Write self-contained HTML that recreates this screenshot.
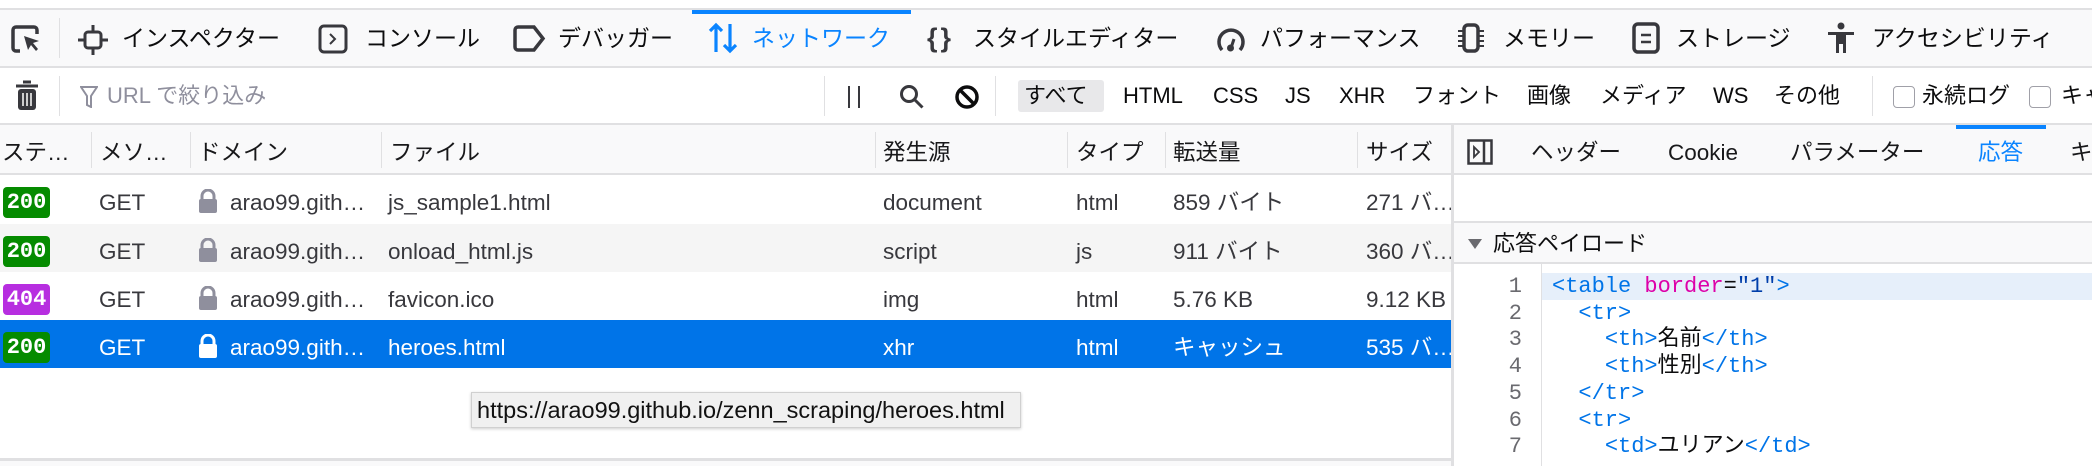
<!DOCTYPE html>
<html><head><meta charset="utf-8"><style>
*{margin:0;padding:0;box-sizing:border-box}
body{width:2092px;height:466px;overflow:hidden;background:#fff;font-family:"Liberation Sans","Noto Sans CJK JP",sans-serif;color:#0c0c0d;position:relative}
.a{position:absolute;white-space:nowrap}
.t{font-size:23px;line-height:56px;top:10px}
.f{font-size:22px;line-height:58px;top:67px}
.h{font-size:22.5px;line-height:50px;top:128px;color:#18181a}
.r{position:absolute;left:0;width:1451px;height:48px;font-size:22.5px;line-height:48px;color:#38383d}
.r span{position:absolute;white-space:nowrap;top:4px}
.b{top:12px;left:3px;width:47px;height:31px;border-radius:4px;color:#fff;font:bold 22px/31px "Liberation Mono",monospace;text-align:center}
.vl{position:absolute;width:1px;background:#e0e0e2}
.code{font-family:"Liberation Mono","Noto Sans CJK JP",monospace;font-size:22px;line-height:26.7px}
.tg{color:#0074e8}.at{color:#dd00a9}.vv{color:#003eaa}
svg{position:absolute}
</style></head><body>
<!-- top toolbar -->
<div class="a" style="top:8px;left:0;width:2092px;height:2px;background:#e0e0e2"></div>
<div class="a" style="top:10px;left:0;width:2092px;height:56px;background:#f9f9fa"></div>
<div class="a" style="top:66px;left:0;width:2092px;height:2px;background:#e0e0e2"></div>
<div class="a" style="top:10px;left:692px;width:219px;height:4px;background:#0a84ff"></div>
<svg style="left:10px;top:24px" width="32" height="30" viewBox="0 0 32 30"><path d="M10 27H6a3 3 0 0 1-3-3V6a3 3 0 0 1 3-3h18a3 3 0 0 1 3 3v4" fill="none" stroke="#38383d" stroke-width="3.5"/><path d="M14 12l15 5-6 2 5 6-2 2-5-6-3 5z" fill="#38383d"/></svg>
<div class="vl" style="left:59px;top:18px;height:40px"></div>
<svg style="left:77px;top:24px" width="32" height="32" viewBox="0 0 32 32"><rect x="8" y="8" width="16" height="16" rx="3" fill="none" stroke="#38383d" stroke-width="3"/><path d="M16 1v7M16 24v7M1 16h7M24 16h7" stroke="#38383d" stroke-width="3"/></svg>
<div class="a t" style="left:122px">インスペクター</div>
<svg style="left:318px;top:24px" width="30" height="30" viewBox="0 0 30 30"><rect x="2" y="2" width="26" height="26" rx="4" fill="none" stroke="#38383d" stroke-width="3"/><path d="M12 10l5 5-5 5" fill="none" stroke="#38383d" stroke-width="2"/></svg>
<div class="a t" style="left:365px">コンソール</div>
<svg style="left:513px;top:25px" width="33" height="27" viewBox="0 0 33 27"><path d="M5 2h16l9 11.5-9 11.5H5a3 3 0 0 1-3-3V5a3 3 0 0 1 3-3z" fill="none" stroke="#38383d" stroke-width="3.5"/></svg>
<div class="a t" style="left:558px">デバッガー</div>
<svg style="left:707px;top:22px" width="32" height="32" viewBox="0 0 32 32"><path d="M9 30V3M3 9l6-6 6 6M23 2v27M17 23l6 6 6-6" fill="none" stroke="#0a84ff" stroke-width="3.2"/></svg>
<div class="a t" style="left:752px;color:#0a84ff">ネットワーク</div>
<div class="a t" style="left:927px;font-weight:bold;font-size:27px;color:#38383d;letter-spacing:3px">{}</div>
<div class="a t" style="left:973px">スタイルエディター</div>
<svg style="left:1215px;top:23px" width="32" height="30" viewBox="0 0 32 30"><path d="M7 27A12 12 0 1 1 25 27" fill="none" stroke="#38383d" stroke-width="3.5"/><path d="M16 25l3-9" stroke="#38383d" stroke-width="3"/><circle cx="15.5" cy="25" r="3.5" fill="#38383d"/></svg>
<div class="a t" style="left:1260px">パフォーマンス</div>
<svg style="left:1456px;top:23px" width="30" height="30" viewBox="0 0 30 30"><rect x="8" y="2" width="14" height="26" rx="4" fill="none" stroke="#38383d" stroke-width="3.5"/><path d="M2 8h5M2 13h5M2 18h5M2 23h5M23 8h5M23 13h5M23 18h5M23 23h5" stroke="#38383d" stroke-width="2"/></svg>
<div class="a t" style="left:1503px">メモリー</div>
<svg style="left:1632px;top:22px" width="28" height="32" viewBox="0 0 28 32"><rect x="2" y="2" width="24" height="28" rx="4" fill="none" stroke="#38383d" stroke-width="3.5"/><path d="M9 13h10M9 20h10" stroke="#38383d" stroke-width="2.5"/></svg>
<div class="a t" style="left:1676px">ストレージ</div>
<svg style="left:1827px;top:22px" width="28" height="32" viewBox="0 0 28 32"><circle cx="14" cy="4" r="3.5" fill="#38383d"/><path d="M1 10h26v3h-8v18h-3v-9h-4v9H9V13H1z" fill="#38383d"/></svg>
<div class="a t" style="left:1872px">アクセシビリティ</div>
<!-- filter toolbar -->
<div class="a" style="top:123px;left:0;width:2092px;height:2px;background:#e0e0e2"></div>
<svg style="left:14px;top:80px" width="26" height="32" viewBox="0 0 26 32"><path d="M9 2h8M2 6h22" stroke="#38383d" stroke-width="3"/><rect x="4" y="9" width="18" height="21" rx="3" fill="#38383d"/><path d="M9 13v13M13 13v13M17 13v13" stroke="#fff" stroke-width="1.5"/></svg>
<div class="vl" style="left:59px;top:76px;height:40px"></div>
<svg style="left:80px;top:86px" width="18" height="22" viewBox="0 0 18 22"><path d="M1 1h16l-6 9v11l-4-2v-9z" fill="none" stroke="#8f8f9d" stroke-width="2"/></svg>
<div class="a f" style="left:107px;color:#8f8f9d">URL で絞り込み</div>
<div class="vl" style="left:824px;top:76px;height:40px"></div>
<div class="a" style="left:848px;top:86px;width:2px;height:22px;background:#38383d"></div>
<div class="a" style="left:858px;top:86px;width:2px;height:22px;background:#38383d"></div>
<svg style="left:899px;top:84px" width="26" height="26" viewBox="0 0 26 26"><circle cx="10" cy="10" r="7.5" fill="none" stroke="#38383d" stroke-width="3"/><path d="M15.5 15.5l8 8" stroke="#38383d" stroke-width="3"/></svg>
<svg style="left:954px;top:84px" width="26" height="26" viewBox="0 0 26 26"><circle cx="13" cy="13" r="10" fill="none" stroke="#0c0c0d" stroke-width="3.5"/><path d="M6 6l14 14" stroke="#0c0c0d" stroke-width="3.5"/></svg>
<div class="vl" style="left:995px;top:76px;height:40px"></div>
<div class="a" style="left:1018px;top:80px;width:86px;height:32px;background:#e8e8ea;border-radius:3px"></div>
<div class="a f" style="left:1024px">すべて</div>
<div class="a f" style="left:1123px">HTML</div>
<div class="a f" style="left:1213px">CSS</div>
<div class="a f" style="left:1285px">JS</div>
<div class="a f" style="left:1339px">XHR</div>
<div class="a f" style="left:1413px">フォント</div>
<div class="a f" style="left:1527px">画像</div>
<div class="a f" style="left:1600px">メディア</div>
<div class="a f" style="left:1713px">WS</div>
<div class="a f" style="left:1774px">その他</div>
<div class="vl" style="left:1872px;top:76px;height:40px"></div>
<div class="a" style="left:1893px;top:86px;width:22px;height:22px;border:1.5px solid #a0a0a8;border-radius:4px;background:#fff"></div>
<div class="a f" style="left:1922px">永続ログ</div>
<div class="a" style="left:2029px;top:86px;width:22px;height:22px;border:1.5px solid #a0a0a8;border-radius:4px;background:#fff"></div>
<div class="a f" style="left:2061px">キャ</div>
<!-- table header -->
<div class="a" style="top:125px;left:0;width:1451px;height:50px;background:#f9f9fa"></div>
<div class="a" style="top:173px;left:0;width:2092px;height:2px;background:#e0e0e2"></div>
<div class="vl" style="left:91px;top:132px;height:36px"></div>
<div class="vl" style="left:190px;top:132px;height:36px"></div>
<div class="vl" style="left:381px;top:132px;height:36px"></div>
<div class="vl" style="left:875px;top:132px;height:36px"></div>
<div class="vl" style="left:1067px;top:132px;height:36px"></div>
<div class="vl" style="left:1165px;top:132px;height:36px"></div>
<div class="vl" style="left:1357px;top:132px;height:36px"></div>
<div class="a h" style="left:2px">ステ…</div>
<div class="a h" style="left:100px">メソ…</div>
<div class="a h" style="left:198px">ドメイン</div>
<div class="a h" style="left:390px">ファイル</div>
<div class="a h" style="left:883px">発生源</div>
<div class="a h" style="left:1076px">タイプ</div>
<div class="a h" style="left:1173px">転送量</div>
<div class="a h" style="left:1366px">サイズ</div>
<!-- rows -->
<div class="r" style="top:175px"><div class="a b" style="background:#058b00">200</div><span style="left:99px">GET</span><svg style="left:198px;top:14px" width="20" height="25" viewBox="0 0 20 25"><path d="M4 11V7a6 6 0 0 1 12 0v4" fill="none" stroke="#8f8f9d" stroke-width="3"/><rect x="1" y="10" width="18" height="14" rx="2" fill="#8f8f9d"/></svg><span style="left:230px">arao99.gith…</span><span style="left:388px">js_sample1.html</span><span style="left:883px">document</span><span style="left:1076px">html</span><span style="left:1173px">859 バイト</span><span style="left:1366px">271 バ…</span></div>
<div class="r" style="top:224px;background:#f5f5f5"><div class="a b" style="background:#058b00">200</div><span style="left:99px">GET</span><svg style="left:198px;top:14px" width="20" height="25" viewBox="0 0 20 25"><path d="M4 11V7a6 6 0 0 1 12 0v4" fill="none" stroke="#8f8f9d" stroke-width="3"/><rect x="1" y="10" width="18" height="14" rx="2" fill="#8f8f9d"/></svg><span style="left:230px">arao99.gith…</span><span style="left:388px">onload_html.js</span><span style="left:883px">script</span><span style="left:1076px">js</span><span style="left:1173px">911 バイト</span><span style="left:1366px">360 バ…</span></div>
<div class="r" style="top:272px"><div class="a b" style="background:#b72ee0">404</div><span style="left:99px">GET</span><svg style="left:198px;top:14px" width="20" height="25" viewBox="0 0 20 25"><path d="M4 11V7a6 6 0 0 1 12 0v4" fill="none" stroke="#8f8f9d" stroke-width="3"/><rect x="1" y="10" width="18" height="14" rx="2" fill="#8f8f9d"/></svg><span style="left:230px">arao99.gith…</span><span style="left:388px">favicon.ico</span><span style="left:883px">img</span><span style="left:1076px">html</span><span style="left:1173px">5.76 KB</span><span style="left:1366px">9.12 KB</span></div>
<div class="r" style="top:320px;background:#0074e8;color:#fff"><div class="a b" style="background:#058b00">200</div><span style="left:99px">GET</span><svg style="left:198px;top:14px" width="20" height="25" viewBox="0 0 20 25"><path d="M4 11V7a6 6 0 0 1 12 0v4" fill="none" stroke="#fff" stroke-width="3"/><rect x="1" y="10" width="18" height="14" rx="2" fill="#fff"/></svg><span style="left:230px">arao99.gith…</span><span style="left:388px">heroes.html</span><span style="left:883px">xhr</span><span style="left:1076px">html</span><span style="left:1173px">キャッシュ</span><span style="left:1366px">535 バ…</span></div>
<!-- tooltip -->
<div class="a" style="left:471px;top:392px;width:550px;height:36px;background:#f0f0f0;border:1px solid #d0d0d0;box-shadow:0 1px 3px rgba(0,0,0,.2);font-size:23.5px;line-height:34px;padding-left:5px;color:#111">https://arao99.github.io/zenn_scraping/heroes.html</div>
<div class="a" style="left:0;top:458px;width:1451px;height:3px;background:#e0e0e2"></div>
<div class="a" style="left:0;top:461px;width:1451px;height:5px;background:#f9f9fa"></div>
<!-- right panel -->
<div class="a" style="left:1451px;top:125px;width:3px;height:341px;background:#e0e0e2"></div>
<div class="a" style="left:1454px;top:125px;width:638px;height:48px;background:#f9f9fa"></div>
<div class="a" style="left:1956px;top:125px;width:90px;height:4px;background:#0a84ff"></div>
<svg style="left:1467px;top:139px" width="26" height="26" viewBox="0 0 26 26"><rect x="1.5" y="1.5" width="23" height="23" fill="none" stroke="#38383d" stroke-width="2.5"/><path d="M17 1v24" stroke="#38383d" stroke-width="2.5"/><path d="M7 8l5 5-5 5z" fill="none" stroke="#38383d" stroke-width="1.8"/></svg>
<div class="a h" style="left:1531px">ヘッダー</div>
<div class="a h" style="left:1668px">Cookie</div>
<div class="a h" style="left:1790px">パラメーター</div>
<div class="a h" style="left:1978px;color:#0a84ff">応答</div>
<div class="a h" style="left:2070px">キャ</div>
<div class="a" style="left:1454px;top:221px;width:638px;height:2px;background:#e0e0e2"></div>
<div class="a" style="left:1454px;top:223px;width:638px;height:40px;background:#f9f9fa"></div>
<div class="a" style="left:1454px;top:262px;width:638px;height:2px;background:#e0e0e2"></div>
<div class="a" style="left:1468px;top:239px;width:0;height:0;border-left:7px solid transparent;border-right:7px solid transparent;border-top:10px solid #6a6a6f"></div>
<div class="a" style="left:1493px;top:224px;font-size:22px;line-height:40px">応答ペイロード</div>
<div class="a" style="left:1541px;top:264px;width:1px;height:202px;background:#e0e0e2"></div>
<div class="a" style="left:1542px;top:273px;width:550px;height:27px;background:#e6effa"></div>
<div class="a code" style="left:1480px;top:274px;width:42px;text-align:right;color:#6a6a6f">1<br>2<br>3<br>4<br>5<br>6<br>7</div>
<div class="a code" style="left:1552px;top:274px;white-space:pre"><span class="tg">&lt;table </span><span class="at">border</span>=<span class="vv">"1"</span><span class="tg">&gt;</span>
  <span class="tg">&lt;tr&gt;</span>
    <span class="tg">&lt;th&gt;</span>名前<span class="tg">&lt;/th&gt;</span>
    <span class="tg">&lt;th&gt;</span>性別<span class="tg">&lt;/th&gt;</span>
  <span class="tg">&lt;/tr&gt;</span>
  <span class="tg">&lt;tr&gt;</span>
    <span class="tg">&lt;td&gt;</span>ユリアン<span class="tg">&lt;/td&gt;</span></div>
</body></html>
